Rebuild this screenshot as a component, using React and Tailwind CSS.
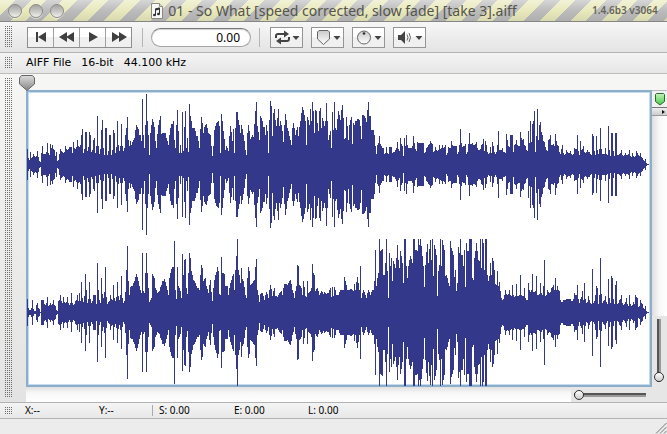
import React from "react";

// Each section lists "x y" pairs of the upper outline, in thirds of a pixel,
// relative to the section's left edge; "mid" is the zero line of the channel.
const TOP_CHANNEL = {
  mid: 238,
  center: 74,
  dense: [128, 375],
  sections: [
    [20, "22 193 27 225 30 201 34 220 39 208 45 218 52 198 56 218 60 231 63 205 66 183 70 208 75 208 81 174 87 210 91 178 94 190 97 180 103 195 106 215 108 203 112 230 117 207 121 192 127 202 130 205 135 183 141 197 148 187 153 187 157 205 160 172 166 192 172 165 178 188 183 150 187 132 191 205 196 141 199 141 203 200 208 141 211 150 214 202 220 165 223 160 226 205 232 95 238 208 244 135 247 105 252 210 256 130 259 130 263 210 268 152 271 152 275 212 281 137 284 145 286 205 292 110 298 200 304 118 310 200 315 150 319 130 322 98 328 185 332 170 335 180 340 165 343 160 349 122 355 132 358 150 361 152 364 170 367 43 370 150 373 190 376 120 379 28 382 110 385 150 388 212 392 145 398 102 403 128 407 170 410 190 415 120 421 95 425 148 435 145 440 160 445 180 450 130 460 108 463 165 467 190 472 77 475 140 478 205 481 180 484 205 487 82 490 200 496 78 499 190 502 160 505 203 508 58 512 95 517 130 523 130 528 155 533 155 538 190 544 98 550 145 553 128 559 118 565 145 571 150 574 185 577 215 580 185 583 135 589 115 595 108 600 145 604 105 607 87 610 140"],
    [220, "0 205 5 87 10 140 15 195 20 185 25 200 31 125 36 168 40 133 43 205 49 82 52 82 55 105 60 145 64 120 70 150 75 195 79 210 82 145 85 122 91 162 97 152 102 168 103 118 109 52 113 125 117 165 121 95 128 110 135 150 140 120 142 140 145 205 148 105 151 48 154 65 157 155 160 85 163 72 166 105 169 125 172 100 175 72 178 125 181 110 187 140 191 173 196 88 203 130 209 155 214 180 218 130 221 115 227 150 231 128 235 155 241 110 247 68 253 90 256 110 259 182 262 98 268 120 272 72 274 110 277 52 280 80 283 145 286 75 289 78 292 115 295 140 298 80 301 70 304 130 308 100 313 125 316 110 319 55 322 110 325 165 331 140 334 190 337 82 340 135 343 53 346 130 349 135 355 80 361 105 364 75 367 60 370 100 373 162 376 160 379 98 385 165 389 120 394 98 397 178 400 115 403 120 412 103 418 105 421 125 424 162 428 90 434 95 440 112 445 52 448 95 451 95 455 135 460 135 463 150 466 185 469 207 473 180 478 155 484 185 490 190 493 207 499 187 505 207 508 187 514 187 517 205 525 197 533 172 537 200 541 160 546 185 549 213 553 160 556 185 559 152 565 190 575 190 580 155 584 175 588 198 593 172 610 175 613 205 620 190 626 180"],
    [430, "0 168 6 177 11 203 16 187 22 200 27 182 31 192 36 180 41 190 45 180 49 210 55 187 60 190 65 168 70 185 78 185 82 208 87 180 91 133 94 175 97 187 105 177 109 207 114 178 118 145 121 178 126 175 132 182 138 173 144 195 150 192 155 182 160 163 163 200 166 170 170 182 176 207 181 188 184 205 187 173 191 185 196 207 202 180 205 138 209 195 217 190 225 205 229 147 233 165 238 188 241 150 244 150 247 150 250 202 254 182 258 165 265 183 268 185 272 143 276 165 281 162 286 185 291 200 295 138 298 175 301 110 304 172 307 118 310 108 313 78 316 203 319 155 322 72 326 165 329 120 332 112 337 150 343 172 347 188 351 200 356 165 361 150 365 180 370 178 373 185 376 147 380 168 385 183 390 208 393 192 397 180 403 210 408 197 416 205 422 198 428 212 434 190 438 192 442 150 447 212 451 168 455 195 460 185 466 205 471 197 477 203 483 210 487 147 490 155 495 210 500 155 506 208 512 130 517 207 522 208 526 190 531 212 535 125 540 213 544 145 547 145 552 213 556 145 560 145 563 210 569 208 575 195 580 213 587 205 593 210 598 196 603 217 608 205 613 218 618 198 623 205 628 213 632 205 638 219 642 228 645 224 650 236 655 238"],
  ],
};

const BOTTOM_CHANNEL = {
  mid: 232,
  center: 222,
  dense: [128, 495],
  sections: [
    [20, "22 193 27 225 34 220 37 195 41 224 45 228 49 212 52 205 57 222 61 231 64 195 70 195 75 212 81 188 85 215 90 205 95 210 100 197 106 215 112 228 115 200 121 180 126 205 130 188 136 205 142 188 148 212 154 175 160 210 166 200 172 180 175 200 178 175 181 198 184 142 190 202 196 117 199 165 203 205 208 143 213 205 220 180 226 180 229 208 232 85 236 165 240 205 245 130 250 190 256 97 261 207 266 203 271 180 276 195 281 150 286 200 292 143 298 195 304 123 310 205 315 172 319 105 322 35 325 138 328 180 332 158 337 155 343 140 349 118 355 140 358 155 361 165 364 175 367 55 370 170 373 175 376 115 379 55 382 115 385 160 388 203 393 190 398 117 402 130 407 160 412 175 418 170 425 150 432 133 438 155 445 182 448 130 451 115 457 97 460 97 463 20 466 165 469 192 472 98 475 155 480 170 484 190 487 58 490 120 493 75 496 72 499 160 502 178 505 115 508 55 511 70 514 110 520 135 525 145 530 155 538 165 544 90 547 100 550 140 556 130 560 155 565 175 571 135 574 172 577 200 583 135 588 113 592 97 595 110 598 178 601 115 604 65 607 115 612 115 617 155 622 155"],
    [220, "0 180 4 67 7 115 13 117 16 155 21 155 25 182 31 145 35 135 40 118 44 165 49 65 52 12 55 105 60 145 64 100 67 132 71 140 75 180 79 190 82 130 85 97 88 110 91 150 97 145 103 135 109 72 113 165 118 202 121 178 127 175 132 195 139 172 145 190 151 152 157 185 163 160 166 185 172 188 178 175 184 170 188 180 193 148 202 152 206 145 211 137 217 165 224 190 229 155 232 92 235 95 238 150 244 160 247 182 250 138 255 185 259 188 262 140 266 175 270 170 274 160 277 88 280 115 283 122 287 170 293 160 297 180 303 170 309 178 314 172 320 178 326 175 330 160 334 187 338 158 341 185 344 158 350 182 356 180 362 165 370 165 373 127 377 140 381 165 388 165 394 163 399 168 403 147 407 165 412 127 415 145 418 165 421 93 424 190 430 165 435 180 440 190 446 167 451 180 456 165 460 165 463 138 466 45 469 155 475 115 478 12 481 50 487 42 490 120 493 120 496 85 499 12 502 110 505 190 508 55 511 95 514 70 518 140 521 80 526 100 529 70 532 32 535 75 538 100 541 50 546 85 550 145 553 12 556 12 559 95 562 130 566 95 571 65 577 85 581 12 584 12 587 45 592 50 595 12 598 30 601 12 606 65 610 95 613 158 617 90 622 27 626 85"],
    [430, "0 15 4 75 7 12 10 125 13 30 19 60 22 183 25 110 28 90 31 12 34 95 37 15 40 30 43 45 46 125 50 120 54 145 58 155 61 20 64 40 70 60 73 128 76 105 79 170 82 145 85 38 88 55 91 12 94 60 98 60 101 95 103 45 106 157 109 25 112 50 115 50 118 12 121 12 124 12 127 130 130 135 133 70 136 48 139 25 142 50 145 75 148 80 151 12 154 100 157 12 160 25 163 105 166 12 169 12 172 120 175 140 178 125 181 85 184 120 187 70 190 80 193 105 196 147 199 150 202 108 205 155 208 142 212 170 217 195 222 180 227 165 233 180 238 165 243 185 248 150 253 187 256 185 259 147 263 185 268 182 271 120 275 180 279 185 283 160 288 195 292 195 295 145 300 172 304 165 307 117 311 172 316 170 319 123 323 180 328 178 331 145 336 180 340 155 343 77 347 185 353 165 358 175 363 160 370 150 373 165 376 130 379 165 382 155 388 170 393 202 400 196 410 192 420 193 428 200 433 175 438 182 442 150 447 205 452 192 457 170 460 195 463 145 468 205 475 185 479 195 483 208 487 103 491 205 496 180 499 155 502 160 506 208 511 70 516 205 521 200 526 185 531 208 535 132 540 205 544 125 547 130 552 208 555 150 558 138 563 208 569 195 575 182 580 212 586 203 590 190 594 215 598 182 604 215 609 203 613 207 617 182 622 190 626 217 632 195 638 208 642 222 645 215 650 230 655 232"],
  ],
};

function buildPath({ mid, center, dense, sections }) {
  const points = sections.flatMap(([origin, text]) => {
    const n = text.split(" ").map(Number);
    const out = [];
    for (let i = 0; i < n.length; i += 2) {
      out.push([origin + Math.floor(n[i] / 3), Math.round((mid - n[i + 1]) / 3)]);
    }
    return out;
  });
  const heights = new Map();
  points.forEach(([x, h], i) => {
    heights.set(x, h);
    const next = points[i + 1];
    if (!next) return;
    const low = Math.min(h, next[1]);
    const gap = Math.abs(h - next[1]);
    const blend = x > dense[0] && x < dense[1] ? 0.6 : 0.2;
    for (let p = x + 1; p < next[0]; p++) {
      heights.set(p, Math.round(low + gap * blend));
    }
  });
  let d = "";
  heights.forEach((h, x) => {
    d += `M${x - 26} ${center - h}h1v${h * 2 + 1}h-1z`;
  });
  return d;
}

const TOP_PATH = buildPath(TOP_CHANNEL);
const BOTTOM_PATH = buildPath(BOTTOM_CHANNEL);

function Grip({ className = "" }) {
  return (
    <div
      className={`ml-[5px] w-[7px] shrink-0 bg-[conic-gradient(transparent_75%,#6c6c6c_0)] bg-[length:2px_2px] ${className}`}
    />
  );
}

function Light() {
  return (
    <button
      aria-label="Window control"
      className="size-[14px] rounded-full border border-[#8c8c86] bg-linear-to-b from-[#a4a4a2] via-[#c6c6c3] to-[#f0f0ec] shadow-[0_1px_0_#ffffff90]"
    />
  );
}

function TransportButton({ label, children }) {
  return (
    <button
      aria-label={label}
      className="flex h-full flex-1 items-center justify-center border-l border-[#a0a0a0] bg-linear-to-b from-white from-50% to-[#f0f0f0] to-50% first:border-l-0"
    >
      <svg width="20" height="12" viewBox="0 0 20 12" fill="#3f3f3f">
        {children}
      </svg>
    </button>
  );
}

function MenuButton({ label, children }) {
  return (
    <button
      aria-label={label}
      className="flex h-[21px] w-[33px] items-center justify-center border border-[#959595] bg-linear-to-b from-white from-50% to-[#f0f0f0] to-50%"
    >
      <svg width="27" height="17" viewBox="0 0 27 17">
        {children}
        <path d="M19.500 7h7l-3.500 4z" fill="#444" />
      </svg>
    </button>
  );
}

function Defs() {
  return (
    <svg width="0" height="0" className="absolute">
      <defs>
        <linearGradient id="steel" x1="0" y1="0" x2="0" y2="1">
          <stop offset="0" stopColor="#ddd" />
          <stop offset="1" stopColor="#858585" />
        </linearGradient>
        <linearGradient id="pale" x1="0" y1="0" x2="0" y2="1">
          <stop offset="0" stopColor="#c9c9c9" />
          <stop offset="1" stopColor="#fff" />
        </linearGradient>
        <linearGradient id="green" x1="0" y1="0" x2="0" y2="1">
          <stop offset="0" stopColor="#c5f3bd" />
          <stop offset="1" stopColor="#43c945" />
        </linearGradient>
      </defs>
    </svg>
  );
}

function TitleBar() {
  return (
    <header className="relative flex h-[22px] items-center border-b border-[#858585] bg-[linear-gradient(#ffffff66,#ffffff00_50%,#00000012),repeating-linear-gradient(135deg,#e9e9bd_0_11px,#bcbcbd_11px_22px)] pl-2">
      <div className="flex gap-[7px]">
        <Light />
        <Light />
        <Light />
      </div>
      <div className="flex flex-1 items-center justify-center gap-[5px] pl-3 text-[14px] text-[#55554c]">
        <svg width="12" height="16" viewBox="0 0 12 16">
          <path d="M.5.5h8l3 3v12H.5z" fill="#f7f7f5" stroke="#8a8a80" />
          <path d="M8.500.5v3h3" fill="#ddd" stroke="#8a8a80" />
          <path d="M4.500 12V6l4-1v6" fill="none" stroke="#333" />
          <path d="M4.500 6.500l4-1" stroke="#333" strokeWidth="2" />
          <ellipse cx="3.500" cy="12" rx="1.500" ry="1.200" fill="#333" />
          <ellipse cx="7.500" cy="11" rx="1.500" ry="1.200" fill="#333" />
        </svg>
        <h1 className="whitespace-nowrap leading-[20px]">
          01 - So What [speed corrected, slow fade] [take 3].aiff
        </h1>
      </div>
      <span className="w-[75px] whitespace-nowrap text-[10px] font-semibold text-[#66665c]">
        1.4.6b3 v3064
      </span>
    </header>
  );
}

function Toolbar() {
  return (
    <div className="flex h-[31px] items-center border-b border-[#b4b4b4] bg-linear-to-b from-[#f6f6f6] to-[#e4e4e4]">
      <Grip className="h-[22px]" />
      <div className="ml-[15px] flex h-[21px] w-[105px] border border-[#8e8e8e]">
        <TransportButton label="Go to start">
          <path d="M5 1h2v10H5zM15 1v10L7 6z" />
        </TransportButton>
        <TransportButton label="Rewind">
          <path d="M10 1v10L2 6zM17 1v10L9 6z" />
        </TransportButton>
        <TransportButton label="Play">
          <path d="M6 1v10l9-5z" />
        </TransportButton>
        <TransportButton label="Fast forward">
          <path d="M3 1v10l8-5zM10 1v10l8-5z" />
        </TransportButton>
      </div>
      <div className="ml-[10px] h-[19px] w-px bg-[#b5b5b5]" />
      <input
        aria-label="Position"
        defaultValue="0.00"
        className="ml-2 h-[19px] w-[100px] rounded-full border border-[#a5a5a5] border-t-[#777] bg-white pr-[10px] text-right text-[12px] leading-[16px] text-black shadow-[inset_0_1px_1px_#00000030]"
      />
      <div className="ml-2 h-[19px] w-px bg-[#b5b5b5]" />
      <div className="ml-[10px] flex gap-2">
        <MenuButton label="Loop">
          <path d="M3 9V7q0-2 2-2h7M16 8v2q0 2-2 2H7" fill="none" stroke="#444" strokeWidth="2" />
          <path d="M11 1.500v7L16 5zM8 8.500v7L3 12z" fill="#444" />
        </MenuButton>
        <MenuButton label="Markers">
          <path d="M3.500 3l1.500-1.500h9L15.500 3v7l-6 5.500-6-5.500z" fill="url(#pale)" stroke="#666" />
        </MenuButton>
        <MenuButton label="Gain">
          <circle cx="9" cy="8.500" r="6.500" fill="url(#pale)" stroke="#666" />
          <circle cx="9" cy="4.500" r="1.300" fill="#333" />
        </MenuButton>
        <MenuButton label="Volume">
          <path d="M2 6h3l4-4v13l-4-4H2z" fill="#444" />
          <path d="M11 5.500q2 3 0 6M13 4q3 4.500 0 9" fill="none" stroke="#666" />
        </MenuButton>
      </div>
    </div>
  );
}

function WavePanel() {
  return (
    <main className="flex flex-1 bg-linear-to-b from-[#f6f6f4] to-[#e3e3e3]">
      <Grip className="mt-1 mb-[5px]" />
      <div className="ml-[14px] flex min-w-0 flex-1 flex-col pt-4">
        <div className="relative h-[297px] bg-white shadow-[inset_0_0_0_2px_#8caecb,inset_0_0_0_3px_#c5dbee]">
          <svg
            viewBox="0 0 626 297"
            preserveAspectRatio="none"
            shapeRendering="crispEdges"
            className="block size-full"
            fill="#34388b"
          >
            <path d={TOP_PATH} />
            <path d={BOTTOM_PATH} />
          </svg>
          <svg width="16" height="16" viewBox="0 0 16 16" className="absolute -top-[15px] -left-[7px]">
            <path d="M.5 3L2.500.5h11l2 2.500v6l-7.500 6.500L.5 9z" fill="url(#steel)" stroke="#666" />
          </svg>
        </div>
        <div className="flex h-[15px]">
          <div className="flex-1 bg-linear-to-b from-[#e0e0e0] via-[#f8f8f8] via-40% to-white" />
          <div className="flex w-[81px] items-center bg-[#e6e6e6] pl-[3px]">
            <input
              type="range"
              aria-label="Horizontal zoom"
              defaultValue="0"
              className="h-[10px] w-[72px] appearance-none bg-[linear-gradient(transparent_30%,#555_30%_50%,#999_50%_70%,transparent_70%)] [&::-webkit-slider-thumb]:size-[10px] [&::-webkit-slider-thumb]:appearance-none [&::-webkit-slider-thumb]:rounded-full [&::-webkit-slider-thumb]:border [&::-webkit-slider-thumb]:border-[#333] [&::-webkit-slider-thumb]:bg-linear-to-b [&::-webkit-slider-thumb]:from-white [&::-webkit-slider-thumb]:to-[#ccc]"
            />
          </div>
        </div>
      </div>
      <div className="flex w-[15px] flex-col pt-4">
        <button
          aria-label="Marker list"
          className="flex h-[18px] items-center justify-center border-t border-b border-t-[#bbb] border-b-[#777] bg-[#f1f1f1]"
        >
          <svg width="10" height="13" viewBox="0 0 10 13">
            <path d="M.5 1.500l1-1h7l1 1v7L5 12 .5 8.500z" fill="url(#green)" stroke="#286b2c" />
          </svg>
        </button>
        <button
          aria-label="Expand"
          className="flex h-2 items-center justify-end border-b border-[#999] bg-linear-to-b from-[#eee] to-[#ccc] pr-[2px]"
        >
          <svg width="3" height="4" viewBox="0 0 3 4">
            <path d="M0 0l3 2-3 2z" fill="#111" />
          </svg>
        </button>
        <div className="h-[200px] bg-linear-to-r from-[#dedede] via-[#f8f8f8] via-50% to-white" />
        <div className="flex flex-1 bg-[#e6e6e6] pt-[3px] pl-[2px]">
          <input
            type="range"
            aria-label="Vertical zoom"
            defaultValue="0"
            className="h-[63px] w-[10px] appearance-none bg-[linear-gradient(90deg,transparent_30%,#555_30%_50%,#999_50%_70%,transparent_70%)] [direction:rtl] [writing-mode:vertical-lr] [&::-webkit-slider-thumb]:size-[10px] [&::-webkit-slider-thumb]:appearance-none [&::-webkit-slider-thumb]:rounded-full [&::-webkit-slider-thumb]:border [&::-webkit-slider-thumb]:border-[#333] [&::-webkit-slider-thumb]:bg-linear-to-b [&::-webkit-slider-thumb]:from-white [&::-webkit-slider-thumb]:to-[#ccc]"
          />
        </div>
      </div>
    </main>
  );
}

export default function App() {
  return (
    <div className="flex min-h-screen flex-col bg-[#ececec] font-['Noto_Sans','Open_Sans',sans-serif] text-black">
      <Defs />
      <TitleBar />
      <Toolbar />
      <div className="flex h-[21px] items-center border-b border-[#bdbdbd] bg-linear-to-b from-[#f4f4f4] to-[#e6e6e6] font-['DejaVu_Sans',sans-serif] text-[11px]">
        <Grip className="h-[12px]" />
        <div className="ml-[14px] flex gap-[10px]">
          <span>AIFF File</span>
          <span>16-bit</span>
          <span>44.100 kHz</span>
        </div>
      </div>
      <WavePanel />
      <div className="flex h-[17px] items-center border-t border-b border-[#b3b3b3] bg-linear-to-b from-[#f4f4f4] to-[#e8e8e8] text-[10px]">
        <Grip className="h-[7px]" />
        <span className="ml-[13px] w-[74px]">X:--</span>
        <span className="w-[53px]">Y:--</span>
        <div className="mr-[6px] h-[11px] w-px bg-[#aaa]" />
        <span className="w-[75px]">S: 0.00</span>
        <span className="w-[74px]">E: 0.00</span>
        <span>L: 0.00</span>
      </div>
      <footer className="flex h-[15px] items-end justify-end">
        <svg width="12" height="12" viewBox="0 0 12 12" stroke="#777" fill="none">
          <path d="M1 11.500L11.500 1M5 11.500L11.500 5M9 11.500L11.500 9" />
        </svg>
      </footer>
    </div>
  );
}
